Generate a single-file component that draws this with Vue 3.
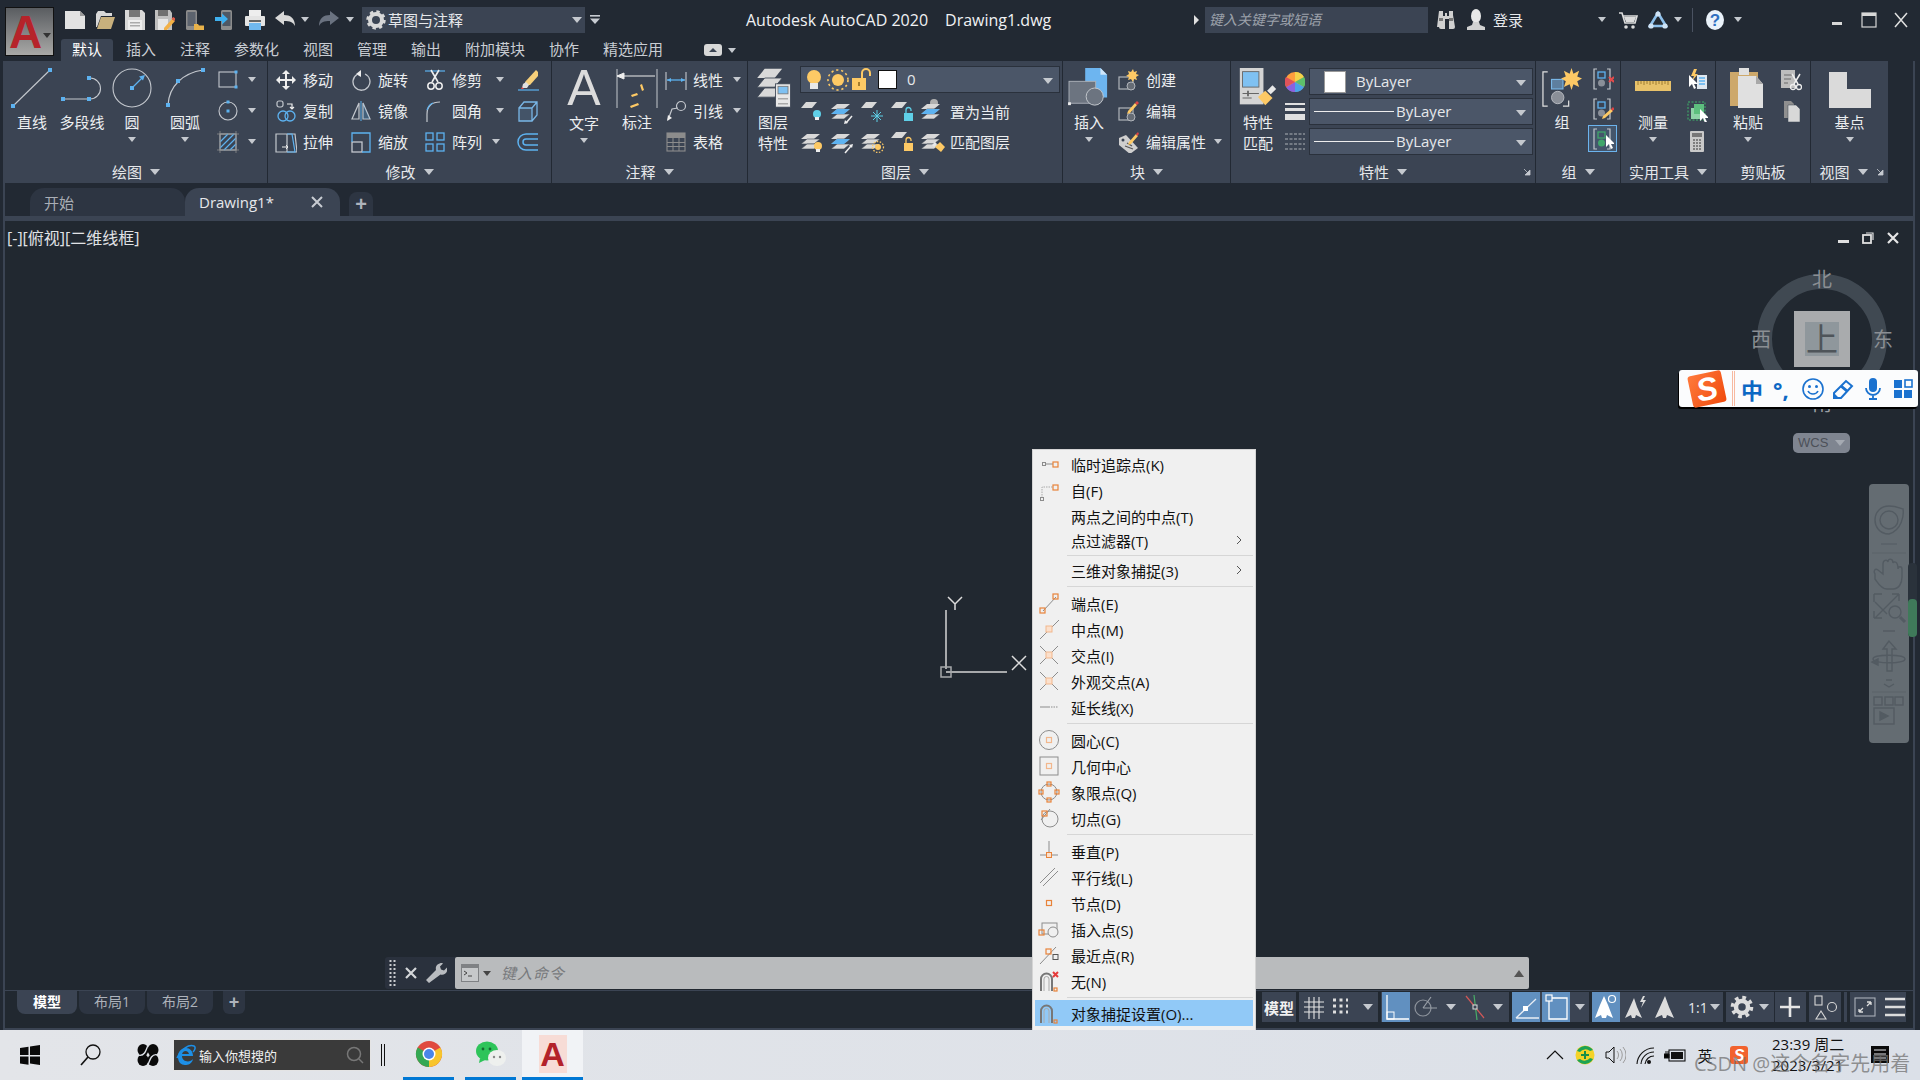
<template>
  <div class="app">
    <!-- application logo sits over title bar and tab row -->
    <div class="logo"><span class="logo-a">A</span><i class="logo-dd"></i></div>

    <header class="titlebar">
      <div class="qat">
        <Ico n="new" :w="20" :h="20" class="q-new" />
        <Ico n="open" :w="20" :h="20" />
        <Ico n="save" :w="20" :h="20" />
        <Ico n="saveas" :w="20" :h="20" />
        <Ico n="cloudopen" :w="20" :h="20" />
        <Ico n="cloudsave" :w="20" :h="20" />
        <Ico n="print" :w="20" :h="20" />
        <Ico n="undo" :w="20" :h="20" />
        <i class="dd dd-undo"></i>
        <Ico n="redo" :w="20" :h="20" class="q-redo" />
        <i class="dd dd-redo"></i>
      </div>
      <div class="workspace">
        <Ico n="gear" :w="20" :h="20" />
        <span>草图与注释</span>
        <i class="dd dd-big"></i>
      </div>
      <Ico n="qatmenu" :w="10" :h="10" class="qatmenu" />
      <div class="app-title">Autodesk AutoCAD 2020<span class="doc-name">Drawing1.dwg</span></div>
      <i class="search-tri"></i>
      <div class="searchbox">键入关键字或短语</div>
      <Ico n="binoc" :w="20" :h="20" class="t-binoc" />
      <Ico n="user" :w="20" :h="22" class="t-user" />
      <span class="login">登录</span>
      <i class="dd dd-login"></i>
      <Ico n="cart" :w="20" :h="20" class="t-cart" />
      <Ico n="a360" :w="20" :h="20" class="t-a360" />
      <i class="dd dd-a360"></i>
      <b class="t-sep"></b>
      <Ico n="help" :w="20" :h="22" class="t-help" />
      <i class="dd dd-help"></i>
      <div class="winbtns">
        <Ico n="wmin" :w="14" :h="18" />
        <Ico n="wmax" :w="16" :h="18" />
        <Ico n="wclose" :w="16" :h="18" />
      </div>
    </header>

    <nav class="tabrow">
      <span v-for="(t, i) in ribbonTabs" :key="t" class="rtab" :class="{ on: i === 0 }">{{ t }}</span>
      <Ico n="panelbtn" :w="18" :h="12" class="rtab-btn" />
      <i class="dd dd-tab"></i>
    </nav>

    <div class="main">
      <section class="ribbon">
        <!-- 绘图 -->
        <div class="panel p-draw">
          <div class="body">
            <div class="big w54"><Ico n="line" :w="44" :h="40" /><span>直线</span></div>
            <div class="big w46"><Ico n="pline" :w="44" :h="40" /><span>多段线</span></div>
            <div class="big w54"><Ico n="circle" :w="44" :h="40" /><span>圆</span><i class="dd"></i></div>
            <div class="big w52"><Ico n="arc" :w="44" :h="40" /><span>圆弧</span><i class="dd"></i></div>
            <div class="col draw-col">
              <div class="sm"><Ico n="rect" /><i class="dd"></i></div>
              <div class="sm"><Ico n="ell" /><i class="dd"></i></div>
              <div class="sm"><Ico n="hatch" /><i class="dd"></i></div>
            </div>
          </div>
          <div class="ptitle">绘图<i class="dd dd-t"></i></div>
        </div>
        <!-- 修改 -->
        <div class="panel p-modify">
          <div class="body">
            <div class="mod-grid">
              <div class="sm"><Ico n="move" /><span>移动</span></div>
              <div class="sm"><Ico n="rotate" /><span>旋转</span></div>
              <div class="sm"><Ico n="trim" /><span>修剪</span><i class="dd"></i></div>
              <Ico n="erase" />
              <div class="sm"><Ico n="copy" /><span>复制</span></div>
              <div class="sm"><Ico n="mirror" /><span>镜像</span></div>
              <div class="sm"><Ico n="fillet" /><span>圆角</span><i class="dd"></i></div>
              <Ico n="box3d" />
              <div class="sm"><Ico n="stretch" /><span>拉伸</span></div>
              <div class="sm"><Ico n="scale" /><span>缩放</span></div>
              <div class="sm"><Ico n="array" /><span>阵列</span><i class="dd dd-arr"></i></div>
              <Ico n="offset" />
            </div>
          </div>
          <div class="ptitle">修改<i class="dd dd-t"></i></div>
        </div>
        <!-- 注释 -->
        <div class="panel p-annot">
          <div class="body">
            <div class="big w64"><span class="big-a">A</span><span>文字</span><i class="dd"></i></div>
            <div class="big w42"><Ico n="dim" :w="42" :h="40" /><span>标注</span></div>
            <div class="col annot-col">
              <div class="sm"><Ico n="linear" /><span>线性</span><i class="dd"></i></div>
              <div class="sm"><Ico n="leader" /><span>引线</span><i class="dd"></i></div>
              <div class="sm"><Ico n="table" /><span>表格</span></div>
            </div>
          </div>
          <div class="ptitle">注释<i class="dd dd-t"></i></div>
        </div>
        <!-- 图层 -->
        <div class="panel p-layer">
          <div class="body">
            <div class="big w50 two"><Ico n="layers" :w="42" :h="48" /><span>图层</span><span>特性</span></div>
            <div class="layer-col">
              <div class="combo layer-combo">
                <Ico n="bulb" :w="20" :h="24" />
                <Ico n="sun" :w="22" :h="24" />
                <Ico n="lock" :w="20" :h="24" />
                <b class="swatch"></b>
                <span>0</span>
                <i class="dd dd-big"></i>
              </div>
              <div class="layer-row">
                <Ico n="l1" :w="26" :h="26" /><Ico n="l2" :w="26" :h="26" /><Ico n="l3" :w="26" :h="26" /><Ico n="l4" :w="26" :h="26" /><Ico n="l5" :w="26" :h="26" /><span>置为当前</span>
              </div>
              <div class="layer-row">
                <Ico n="l6" :w="26" :h="26" /><Ico n="l7" :w="26" :h="26" /><Ico n="l8" :w="26" :h="26" /><Ico n="l9" :w="26" :h="26" /><Ico n="l10" :w="26" :h="26" /><span>匹配图层</span>
              </div>
            </div>
          </div>
          <div class="ptitle">图层<i class="dd dd-t"></i></div>
        </div>
        <!-- 块 -->
        <div class="panel p-block">
          <div class="body">
            <div class="big w52"><Ico n="insert" :w="44" :h="42" /><span>插入</span><i class="dd"></i></div>
            <div class="col block-col">
              <div class="sm"><Ico n="bcreate" /><span>创建</span></div>
              <div class="sm"><Ico n="bedit" /><span>编辑</span></div>
              <div class="sm"><Ico n="battr" /><span>编辑属性</span><i class="dd"></i></div>
            </div>
          </div>
          <div class="ptitle">块<i class="dd dd-t"></i></div>
        </div>
        <!-- 特性 -->
        <div class="panel p-prop">
          <div class="body">
            <div class="big w54 two"><Ico n="match" :w="40" :h="44" /><span>特性</span><span>匹配</span></div>
            <div class="prop-col">
              <div class="prop-row">
                <Ico n="wheel" :w="20" :h="24" />
                <div class="combo"><b class="swatch swatch-b"></b><span class="by1">ByLayer</span><i class="dd dd-big"></i></div>
              </div>
              <div class="prop-row">
                <Ico n="lweight" :w="20" :h="24" />
                <div class="combo"><b class="ln"></b><span>ByLayer</span><i class="dd dd-big"></i></div>
              </div>
              <div class="prop-row">
                <Ico n="ltype" :w="20" :h="24" />
                <div class="combo"><b class="ln"></b><span>ByLayer</span><i class="dd dd-big"></i></div>
              </div>
            </div>
          </div>
          <div class="ptitle">特性<i class="dd dd-t"></i><Ico n="expand" :w="8" :h="8" class="expand" /></div>
        </div>
        <!-- 组 -->
        <div class="panel p-group">
          <div class="body">
            <div class="big w52"><Ico n="group" :w="42" :h="42" /><span>组</span></div>
            <div class="col group-col">
              <div class="gb"><Ico n="gdel" /></div>
              <div class="gb"><Ico n="gedit" /></div>
              <div class="gb gb-on"><Ico n="gsel" /></div>
            </div>
          </div>
          <div class="ptitle">组<i class="dd dd-t"></i></div>
        </div>
        <!-- 实用工具 -->
        <div class="panel p-util">
          <div class="body">
            <div class="big w64"><Ico n="ruler" :w="40" :h="40" /><span>测量</span><i class="dd"></i></div>
            <div class="col util-col">
              <div class="sm"><Ico n="qsel" /></div>
              <div class="sm"><Ico n="selall" /></div>
              <div class="sm"><Ico n="calc" /></div>
            </div>
          </div>
          <div class="ptitle">实用工具<i class="dd dd-t"></i></div>
        </div>
        <!-- 剪贴板 -->
        <div class="panel p-clip">
          <div class="body">
            <div class="big w64"><Ico n="paste" :w="36" :h="40" /><span>粘贴</span><i class="dd"></i></div>
            <div class="col">
              <div class="sm"><Ico n="cut" /></div>
              <div class="sm"><Ico n="copyclip" /></div>
            </div>
          </div>
          <div class="ptitle">剪贴板</div>
        </div>
        <!-- 视图 -->
        <div class="panel p-view">
          <div class="body">
            <div class="big w77"><Ico n="base" :w="42" :h="40" /><span>基点</span><i class="dd"></i></div>
          </div>
          <div class="ptitle view-t">视图<i class="dd dd-t"></i><Ico n="expand" :w="8" :h="8" class="expand" /></div>
        </div>
      </section>

      <div class="doctabs">
        <div class="dtab">开始</div>
        <div class="dtab on"><span>Drawing1*</span><Ico n="x" :w="12" :h="12" /></div>
        <div class="dtab-add">+</div>
      </div>
      <div class="docbar"></div>

      <section class="viewport">
        <div class="vp-label">[-][俯视][二维线框]</div>
        <div class="vp-btns">
          <Ico n="vmin" :w="14" :h="14" /><Ico n="vrest" :w="14" :h="14" /><Ico n="vclose" :w="14" :h="14" />
        </div>

        <div class="viewcube">
          <div class="ring"></div>
          <div class="cube"><div class="cube-in">上</div></div>
          <span class="dir d-n">北</span>
          <span class="dir d-w">西</span>
          <span class="dir d-e">东</span>
          <span class="dir d-s">南</span>
          <div class="wcs">WCS<i class="wcs-tri"></i></div>
        </div>

        <div class="sogou">
          <div class="sg-logo"><span>S</span></div>
          <b class="sg-sep"></b>
          <span class="sg-zh">中</span>
          <span class="sg-pu">°,</span>
          <Ico n="smile" :w="24" :h="24" />
          <Ico n="pen" :w="24" :h="24" />
          <Ico n="mic" :w="24" :h="24" />
          <Ico n="grid4" :w="24" :h="24" />
        </div>

        <div class="navbar"><Ico n="nav" :w="40" :h="259" /></div>
        <div class="nav-scroll"><b></b></div>

        <Ico n="ucs" :w="110" :h="90" class="ucs" />

        <div class="cmd">
          <div class="cmd-grip">
            <Ico n="grip" :w="8" :h="28" />
            <Ico n="cx" :w="14" :h="14" />
            <Ico n="wrench" :w="22" :h="22" />
          </div>
          <div class="cmd-input">
            <Ico n="term" :w="20" :h="20" />
            <i class="dd dd-cmd"></i>
            <span>键入命令</span>
            <i class="dd-up"></i>
          </div>
        </div>
      </section>

      <footer class="statusrow">
        <div class="ltabs">
          <span class="ltab on">模型</span>
          <span class="ltab l1">布局1</span>
          <span class="ltab l2">布局2</span>
          <span class="ltab-add">+</span>
        </div>
        <div class="status">
          <div class="g g1">模型</div>
          <div class="g g2"><Ico n="sgrid" :w="24" :h="26" class="s1" /><Ico n="sdots" :w="24" :h="26" class="s2" /><i class="dd dd-s dd-g2"></i></div>
          <div class="g g3">
            <div class="sb on"><Ico n="sortho" :w="26" :h="28" /></div>
            <Ico n="spolar" :w="28" :h="26" /><i class="dd dd-s dd-g3"></i>
            <Ico n="siso" :w="26" :h="26" class="s3" /><i class="dd dd-s"></i>
          </div>
          <div class="g g4">
            <div class="sb on"><Ico n="sosnap" :w="26" :h="28" /></div>
            <div class="sb on"><Ico n="sotrack" :w="26" :h="28" /></div>
            <i class="dd dd-s"></i>
          </div>
          <div class="g g5">
            <div class="sb on"><Ico n="sann" :w="26" :h="28" /></div>
            <Ico n="sann2" :w="26" :h="28" class="s4" />
            <Ico n="sann3" :w="26" :h="28" class="s4" />
            <span class="scale">1:1</span><i class="dd dd-s dd-sc"></i>
          </div>
          <div class="g g6"><Ico n="sgear" :w="24" :h="24" /><i class="dd dd-s"></i><b class="g6-sep"></b><Ico n="splus" :w="24" :h="24" /></div>
          <div class="g g7"><Ico n="sshape" :w="26" :h="26" /></div>
          <div class="g g8s"></div>
          <div class="g g8"><Ico n="sfull" :w="24" :h="24" /><Ico n="smenu" :w="24" :h="24" class="s5" /></div>
        </div>
      </footer>
    </div>

    <footer class="taskbar">
      <div class="tb-slot tb-win"><Ico n="win" :w="22" :h="22" /></div>
      <div class="tb-slot tb-find"><Ico n="find" :w="24" :h="24" /></div>
      <div class="tb-slot tb-swirl"><Ico n="swirl" :w="24" :h="24" /></div>
      <div class="tb-search">
        <Ico n="ie" :w="20" :h="22" />
        <span>输入你想搜的</span>
        <Ico n="mag" :w="18" :h="18" class="tb-mag" />
      </div>
      <div class="tb-bars"></div>
      <div class="tb-app chrome"><Ico n="chrome" :w="28" :h="28" /></div>
      <div class="tb-app wechat"><Ico n="wechat" :w="32" :h="28" /></div>
      <div class="tb-app acad"><span class="tb-a">A</span></div>
      <div class="tray">
        <div class="tslot"><Ico n="caret" :w="18" :h="12" /></div>
        <div class="tslot"><Ico n="trayg" :w="20" :h="20" /></div>
        <div class="tslot"><Ico n="speaker" :w="22" :h="20" /></div>
        <div class="tslot"><Ico n="wifi" :w="20" :h="20" /></div>
        <div class="tslot"><Ico n="battery" :w="22" :h="16" /></div>
        <div class="tslot t-ying">英</div>
        <div class="tslot t-sg"><Ico n="traysg" :w="20" :h="20" /></div>
        <div class="clock"><div>23:39 周二</div><div>2023/3/21</div></div>
        <div class="tslot t-note"><Ico n="note" :w="20" :h="20" /></div>
      </div>
      <div class="watermark">CSDN @这个名字先用着</div>
    </footer>

    <!-- object snap context menu -->
    <div class="menu">
      <template v-for="(m, i) in menuItems" :key="i">
        <div v-if="m.sep" class="m-sep" :style="{ height: m.sep + 'px' }"><b></b></div>
        <div v-else class="m-row" :class="{ hot: m.hot }" :style="{ height: (m.h || 26) + 'px' }">
          <div class="m-ic"><Ico v-if="m.ic" :n="m.ic" :w="22" :h="22" /></div>
          <span class="m-t">{{ m.t }}</span>
          <svg v-if="m.sub" class="m-sub" width="6" height="10" viewBox="0 0 6 10"><path d="M1 1l4 4-4 4" fill="none" stroke="#555" stroke-width="1" /></svg>
        </div>
      </template>
    </div>
  </div>
</template>

<script setup>
import { h } from 'vue'

const L = '#c4c8ce'
const B = '#5db2f0'
const P = '#d9d9d9'
const Y = '#fdc965'
const O = '#e8833a'
const F = '#f2b78d'
const G = '#8c8c8c'

// small helpers for repeated bits of icon markup
const dot = (x, y, s = 4, c = B) => `<rect x="${x - s / 2}" y="${y - s / 2}" width="${s}" height="${s}" fill="${c}"/>`
const sq = (x, y, s = 6, c = O) => `<rect x="${x - s / 2 + 0.5}" y="${y - s / 2 + 0.5}" width="${s}" height="${s}" fill="none" stroke="${c}" stroke-width="1.2"/>`
const sheet = (y, c = P) => `<path d="M5 ${y}h11l-5 6H0z" transform="translate(1 0)" fill="${c}"/>`
const stack = `<path d="M7 6h13l-6 5H1z" fill="${P}"/><path d="M7 11h13l-6 5H1z" fill="${P}" stroke="#3b4453" stroke-width=".6"/><path d="M7 16h13l-6 5H1z" fill="${P}" stroke="#3b4453" stroke-width=".6"/>`
const bulbS = (x, y, c) => `<circle cx="${x}" cy="${y}" r="4" fill="${c}"/><rect x="${x - 2}" y="${y + 3}" width="4" height="3" fill="#eee"/>`
const sunS = (x, y) => `<circle cx="${x}" cy="${y}" r="3" fill="${Y}"/><circle cx="${x}" cy="${y}" r="5.5" fill="none" stroke="${Y}" stroke-width="1.3" stroke-dasharray="1.5 1.5"/>`
const lockS = (x, y, c) => `<rect x="${x}" y="${y}" width="9" height="8" fill="${c}"/><path d="M${x + 2} ${y}v-3a2.5 2.5 0 015 0v1" fill="none" stroke="${c}" stroke-width="1.3"/>`
const cursor = (x, y) => `<path d="M${x} ${y}v12l3-3 2 5 2-1-2-4h4z" fill="#fff"/>`
const grpShape = (c) => `<path d="M5 1H2v20h3M15 1h3v20h-3" fill="none" stroke="${L}" stroke-width="1.2"/><rect x="6" y="4" width="7" height="6" fill="none" stroke="${c}" stroke-width="1.3"/><circle cx="9.5" cy="15" r="3.5" fill="${c === B ? '#8a8f98' : '#3fa66b'}"/>`

const ic = {
  new: `<path d="M0 1h15l5 5v13H0z" fill="#e2e2e2"/><path d="M15 1l5 5h-5z" fill="#9a9a9a"/>`,
  open: `<path d="M1 4l2-3h6l2 2h6v3H6l-4 11H1z" fill="#d8d8d8"/><path d="M6 7h14l-4 12H2z" fill="#c8b07d"/>`,
  save: `<path d="M0 0h17l3 3v17H0z" fill="#d8d8d8"/><rect x="4" y="0" width="11" height="7" fill="#777"/><rect x="3" y="10" width="14" height="10" fill="#eee"/><rect x="5" y="12" width="10" height="1.5" fill="#aaa"/><rect x="5" y="15" width="10" height="1.5" fill="#aaa"/>`,
  saveas: `<path d="M0 0h15l2 3v17H0z" fill="#bfbfbf"/><rect x="3" y="0" width="10" height="6" fill="#6f6f6f"/><rect x="3" y="9" width="10" height="11" fill="#e6e6e6"/><path d="M9 18l8-9 3 2-8 9-3 1z" fill="#f2b046"/><path d="M16.5 8.5l1.8-1.5 2.5 2-1.6 2z" fill="#e05c4a"/>`,
  cloudopen: `<rect x="1" y="0" width="11" height="20" rx="1.5" fill="#8c8c8c"/><rect x="2.5" y="2" width="8" height="14" fill="#5c636e"/><path d="M9 14h4l1 1.5h5V20H9z" fill="#e8b24a"/>`,
  cloudsave: `<rect x="6" y="0" width="11" height="20" rx="1.5" fill="#8c8c8c"/><rect x="7.5" y="2" width="8" height="14" fill="#4f5864"/><path d="M0 7h7V3.5l6 5.5-6 5.5V11H0z" fill="#3fb0ef"/>`,
  print: `<rect x="4" y="0" width="12" height="6" fill="#eee"/><rect x="0" y="6" width="20" height="10" rx="1" fill="#e4e4e4"/><rect x="4" y="13" width="12" height="7" fill="#70b8ee"/><rect x="4" y="10" width="12" height="2" fill="#666"/>`,
  undo: `<path d="M0 8l9-7v4c6 0 11 3 11 11-2-4-5-5-11-5v4z" fill="#d8d8d8"/>`,
  redo: `<path d="M20 8l-9-7v4C5 5 0 8 0 16c2-4 5-5 11-5v4z" fill="#6a7280"/>`,
  gear: `<circle cx="10" cy="10" r="6" fill="none" stroke="#d8d8d8" stroke-width="4"/><circle cx="10" cy="10" r="8" fill="none" stroke="#d8d8d8" stroke-width="3.4" stroke-dasharray="3.2 3.1"/>`,
  qatmenu: `<rect y="0" width="10" height="1.6" fill="#c8ccd2"/><path d="M0 3.5h10L5 9z" fill="#c8ccd2"/>`,
  binoc: `<path d="M3 1h4v5h2v-3h2v3h2V1h4v4l2 12a2 2 0 01-2 2h-4V9H9v10H5a2 2 0 01-2-2L1 17z" fill="#d0d0d0"/><rect x="3" y="8" width="4" height="3" fill="#777"/><rect x="13" y="8" width="4" height="3" fill="#777"/>`,
  user: `<ellipse cx="10" cy="7" rx="5" ry="7" fill="#e8e8e8"/><path d="M7 13h6l1 3 5 2v3H1v-3l5-2z" fill="#d2d2d2"/>`,
  cart: `<path d="M1 3h3l3 10h10l2-7H5" fill="none" stroke="#dcdcdc" stroke-width="1.6"/><path d="M6 7h12l-2 5H8z" fill="#dcdcdc"/><circle cx="8" cy="17" r="1.8" fill="#dcdcdc"/><circle cx="15" cy="17" r="1.8" fill="#dcdcdc"/>`,
  a360: `<path d="M10 3L2 16h16z" fill="none" stroke="#8ec1ec" stroke-width="2.6"/><circle cx="10" cy="4" r="2.6" fill="#cfe3f5"/><circle cx="3" cy="16" r="2.6" fill="#cfe3f5"/><circle cx="17" cy="16" r="2.6" fill="#cfe3f5"/>`,
  help: `<ellipse cx="10" cy="11" rx="9" ry="10" fill="#eaf2fa"/><text x="10" y="17" font-size="17" font-weight="700" text-anchor="middle" fill="#2f6fc0" font-family="Liberation Sans">?</text>`,
  wmin: `<rect x="1" y="11" width="10" height="3" fill="#d8d8d8"/>`,
  wmax: `<rect x="1" y="2" width="14" height="14" fill="none" stroke="#d8d8d8" stroke-width="1.2"/><rect x="1" y="2" width="14" height="3" fill="#d8d8d8"/>`,
  wclose: `<path d="M2 2l12 14M14 2L2 16" stroke="#e0e0e0" stroke-width="1.5"/>`,
  panelbtn: `<rect x="0" y="0" width="18" height="12" rx="3" fill="#d8d8d8"/><path d="M5 8l4-4 4 4z" fill="#3b4453"/>`,

  line: `<path d="M3 38L40 2" stroke="${L}" stroke-width="1.1"/>${dot(3, 38)}${dot(40, 2)}`,
  pline: `<path d="M3 31h27M30 31a10.5 10.5 0 000-21" fill="none" stroke="${L}" stroke-width="1.1"/>${dot(3, 31)}${dot(29, 31)}${dot(29, 10)}`,
  circle: `<circle cx="22" cy="20" r="19" fill="none" stroke="${L}" stroke-width="1.1"/><path d="M22 20L33 9" stroke="${B}" stroke-width="1.2"/><path d="M35 7l-6 1.5 4 4z" fill="${B}"/>${dot(22, 20)}`,
  arc: `<path d="M5 37C6 18 20 5 40 2" fill="none" stroke="${L}" stroke-width="1.1"/>${dot(5, 37)}${dot(15, 13)}${dot(40, 2)}`,
  rect: `<rect x="2" y="3" width="17" height="15" fill="none" stroke="${L}" stroke-width="1.1"/>${dot(19, 3, 3)}${dot(19, 18, 3)}`,
  ell: `<circle cx="11" cy="11" r="9" fill="none" stroke="${L}" stroke-width="1.1"/>${dot(11, 11, 3)}${dot(11, 2, 3)}`,
  hatch: `<rect x="3" y="3" width="16" height="16" fill="none" stroke="${L}" stroke-width="1"/><path d="M3 11l8-8M3 17L17 3M7 19L19 7M13 19l6-6" stroke="${B}" stroke-width="1.2"/><path d="M3 0v22M19 0v22M0 3h22M0 19h22" stroke="${G}" stroke-width=".8"/>`,
  move: `<path d="M11 1l4 4h-3v5h5V7l4 4-4 4v-3h-5v5h3l-4 4-4-4h3v-5H5v3l-4-4 4-4v3h5V5H7z" fill="#eee"/>`,
  rotate: `<path d="M15 5a8.5 8.5 0 11-8 .5" fill="none" stroke="${L}" stroke-width="1.3"/><path d="M11 1v7l-5-3z" fill="#eee"/>`,
  trim: `<path d="M1 2h20" stroke="${B}" stroke-width="1.2"/><path d="M7 1l7 12M15 1L8 13" stroke="#eee" stroke-width="1.6"/><circle cx="7" cy="17" r="3.2" fill="none" stroke="#eee" stroke-width="1.5"/><circle cx="15" cy="17" r="3.2" fill="none" stroke="#eee" stroke-width="1.5"/>`,
  erase: `<path d="M8 13L19 1l2 2v4l-8 9H9z" fill="#f6cf7a"/><path d="M6 15l3-2 3 3-2 3H5z" fill="#e0e0e0"/><path d="M1 21h21" stroke="${B}" stroke-width="1.2"/><path d="M5 18l2 2H4z" fill="#d44"/>`,
  copy: `<rect x="2" y="1" width="6" height="6" rx="2" fill="none" stroke="${L}" stroke-width="1.2"/><path d="M12 4h5v4M15 7l2 2 2-2" fill="none" stroke="#eee" stroke-width="1.2"/><circle cx="8" cy="16" r="5" fill="none" stroke="${B}" stroke-width="1.3"/><circle cx="15" cy="16" r="5" fill="none" stroke="${B}" stroke-width="1.3"/>`,
  mirror: `<path d="M9 3v16H2zM13 3v16h7z" fill="none" stroke="${L}" stroke-width="1.2"/><path d="M11 1v20" stroke="${B}" stroke-width="1"/><path d="M13 3l7 16h-7z" fill="${B}" opacity=".25"/>`,
  fillet: `<path d="M3 22V14C3 6 8 2 16 2" fill="none" stroke="${L}" stroke-width="1.2"/><path d="M9 3c-3 1-5 4-6 7" fill="none" stroke="${B}" stroke-width="1.2"/>`,
  box3d: `<path d="M2 8h13v13H2zM2 8l5-6h13v13l-5 6M15 8l5-6" fill="none" stroke="#79b6e6" stroke-width="1.3"/><rect x="2" y="8" width="13" height="13" fill="#79b6e6" opacity=".15"/>`,
  stretch: `<path d="M1 3h11v18H1zM12 3l8 0 2 18h-10" fill="none" stroke="${L}" stroke-width="1.2"/><path d="M12 3h5l3 18h-8" fill="none" stroke="${B}" stroke-width="1.2"/><path d="M7 16h6M11 14l2 2-2 2" fill="none" stroke="#eee" stroke-width="1"/>`,
  scale: `<rect x="2" y="11" width="10" height="10" fill="none" stroke="${L}" stroke-width="1.3"/><path d="M2 11V2h18v19h-8" fill="none" stroke="${B}" stroke-width="1.3"/>`,
  array: `<g fill="none" stroke="${B}" stroke-width="1.3"><rect x="2" y="2" width="7" height="7"/><rect x="13" y="2" width="7" height="7"/><rect x="2" y="13" width="7" height="7"/><rect x="13" y="13" width="7" height="7"/></g>`,
  offset: `<path d="M21 3H9a7 7 0 000 16h12M21 8H9a2.5 2.5 0 000 6h12" fill="none" stroke="${B}" stroke-width="1.5"/>`,
  dim: `<path d="M1 1v40M41 1v40" stroke="${L}" stroke-width="1"/><path d="M1 8h38M1 8l7-3v6z" stroke="#eee" stroke-width="1" fill="#eee"/><path d="M15 27l6-2 1 2-6 2zM26 16l2 6-2 1-2-6zM14 38l8-3 1 2-8 3z" fill="${Y}"/>`,
  linear: `<path d="M1 3v18M21 3v18" stroke="${L}" stroke-width="1.1"/><path d="M2 11h18" stroke="${B}" stroke-width="1.3"/><path d="M2 11l4-2v4zM20 11l-4-2v4z" fill="${B}"/>`,
  leader: `<path d="M3 20L7 9l6-1" fill="none" stroke="${L}" stroke-width="1.2"/><path d="M2 21l1-6 4 3z" fill="#eee"/><circle cx="16" cy="6" r="4.5" fill="none" stroke="${L}" stroke-width="1.2"/>`,
  table: `<rect x="2" y="2" width="18" height="18" fill="none" stroke="${G}" stroke-width="1.1"/><rect x="2" y="2" width="18" height="5" fill="${G}"/><path d="M2 11.5h18M2 15.5h18M8 7v13M14 7v13" stroke="${G}" stroke-width="1"/>`,
  layers: `<path d="M11 0h21l-9 11H2z" fill="${P}" transform="translate(0 1)"/><path d="M11 0h21l-9 11H2z" fill="${P}" stroke="#3b4453" transform="translate(0 12)"/><path d="M11 0h21l-9 11H2z" fill="${P}" stroke="#3b4453" transform="translate(0 24)"/><rect x="24" y="19" width="18" height="28" fill="#e8e8e8" stroke="#3b4453"/><rect x="27" y="22" width="12" height="9" fill="#7fc1f2" stroke="#777"/><path d="M27 37h12M27 43h12" stroke="#777" stroke-width="1"/>`,
  bulb: `<circle cx="10" cy="9" r="7" fill="${Y}"/><rect x="6" y="15" width="8" height="6" fill="#e8e8e8"/>`,
  sun: `<circle cx="11" cy="12" r="6" fill="${Y}"/><circle cx="11" cy="12" r="10" fill="none" stroke="${Y}" stroke-width="1.6" stroke-dasharray="2.2 2.8"/>`,
  lock: `<rect x="0" y="10" width="14" height="12" fill="${Y}"/><path d="M10 10V5a4 4 0 018 0v3" fill="none" stroke="${Y}" stroke-width="2"/><rect x="6" y="14" width="2" height="4" fill="#a67c2d"/>`,
  l1: `${sheet(4)}${bulbS(17, 16, '#5fd0e8')}`,
  l2: `${stack}<path d="M7 11h13l-6 5H1z" fill="${B}"/><path d="M16 25l6-7" stroke="#eee" stroke-width="1.5"/><path d="M14 26l1-4 3 3z" fill="#eee"/>`,
  l3: `${sheet(4)}<path d="M17 12v12M11 18h12M13 14l8 8M21 14l-8 8" stroke="#5fd0e8" stroke-width="1"/>`,
  l4: `${sheet(4)}${lockS(14, 15, '#5fd0e8')}`,
  l5: `<circle cx="14" cy="5" r="4" fill="#b0b0b0"/>${stack}<path d="M7 11h13l-6 5H1z" fill="${B}"/>`,
  l6: `${stack}${bulbS(18, 18, Y)}`,
  l7: `${stack}<path d="M7 11h13l-6 5H1z" fill="${B}"/><path d="M15 25l6-7" stroke="#eee" stroke-width="1.5"/><path d="M23 16l-1 4-3-3z" fill="#eee"/>`,
  l8: `${stack}${sunS(18, 19)}`,
  l9: `${sheet(4)}${lockS(14, 15, Y)}`,
  l10: `${stack}<path d="M15 19l5-5 5 5-4 5z" fill="${Y}"/><path d="M12 17l3-3 2 2-3 3z" fill="#e8e8e8"/>`,
  insert: `<path d="M18 0h16l7 7v24H18z" fill="#6db5f0"/><path d="M34 0l7 7h-7z" fill="#cfe6fa"/><rect x="1" y="14" width="28" height="23" fill="#6c7480" stroke="#aab0b8"/><circle cx="28" cy="30" r="9" fill="#6c7480" stroke="#c4c8ce"/><rect x="0" y="36" width="3" height="3" fill="#eee"/>`,
  bcreate: `<rect x="2" y="8" width="14" height="12" fill="none" stroke="#b0b4ba" stroke-width="1.2"/><circle cx="14" cy="17" r="4" fill="#666c75" stroke="#b0b4ba"/><path d="M16 0l1 3 3-1-1 3 3 1-3 2 1 3-3-1-1 3-2-3-3 1 1-3-3-1 3-2-1-3 3 1z" fill="${Y}"/>`,
  bedit: `<rect x="2" y="8" width="14" height="12" fill="none" stroke="#b0b4ba" stroke-width="1.2"/><circle cx="14" cy="17" r="4" fill="#666c75" stroke="#b0b4ba"/><path d="M11 11l7-8 2 2-7 8-3 1z" fill="${Y}"/><path d="M18 3l2-2 2 2-2 2z" fill="#d44"/>`,
  battr: `<path d="M2 7l7-3 12 13-8 6L2 14z" fill="#cfcfcf"/><circle cx="6" cy="9" r="1.5" fill="#3b4453"/><path d="M8 15l8 3M10 12l5 3" stroke="#555" stroke-width="1.2"/><path d="M12 11l7-8 2 2-7 8-3 1z" fill="${Y}"/><path d="M19 3l2-2 1 2-2 2z" fill="#d44"/>`,
  match: `<rect x="0" y="0" width="26" height="40" fill="#d4d4d4"/><rect x="3" y="4" width="18" height="17" fill="#7fc1f2" stroke="#666"/><path d="M3 28h18M3 33h10" stroke="#666" stroke-width="1.2"/><path d="M9 25v6" stroke="#666" stroke-width="2"/><path d="M20 32l8-7 8 8-8 8z" fill="${Y}"/><path d="M30 25l6-6 4 4-6 6z" fill="#e8e8e8"/>`,
  wheel: `<circle cx="10" cy="12" r="10" fill="#ff9e3d"/><path d="M10 12L10 2a10 10 0 019 5z" fill="#f4d34a"/><path d="M10 12l9-5a10 10 0 010 10z" fill="#5dbf6a"/><path d="M10 12l9 5a10 10 0 01-9 5z" fill="#4aa3e8"/><path d="M10 12v10a10 10 0 01-9-5z" fill="#8a62e0"/><path d="M10 12l-9 5a10 10 0 010-10z" fill="#e0535a"/>`,
  lweight: `<rect y="3" width="20" height="2" fill="#e0e0e0"/><rect y="8" width="20" height="3" fill="#e0e0e0"/><rect y="14" width="20" height="6" fill="#e0e0e0"/>`,
  ltype: `<path d="M0 4h20M0 9h20M0 14h20M0 19h20" stroke="#aeb2b8" stroke-width="1.2" stroke-dasharray="3 1.5"/>`,
  expand: `<path d="M1 1l5 5M7 2v5H2z" stroke="#c5c9cf" fill="#c5c9cf" stroke-width=".8"/>`,
  group: `<path d="M6 4H1v36h5M28 34v6h-6" fill="none" stroke="#e0e0e0" stroke-width="1.3"/><rect x="10" y="12" width="12" height="10" fill="#5e7f9f" stroke="#79b6e6" stroke-width="1.2"/><circle cx="16.5" cy="31" r="6.5" fill="#8a8f98" stroke="#b8bcc2"/><path d="M31 0l2 6 6-3-2 6 5 2-5 3 2 6-6-3-2 6-2-6-6 3 2-6-5-3 5-2-2-6 6 3z" fill="${Y}"/>`,
  gdel: `${grpShape(B)}<path d="M17 9l5 5M22 9l-5 5" stroke="#e34b4b" stroke-width="2"/>`,
  gedit: `${grpShape(B)}<path d="M11 18l8-7 2 2-8 7-3 1z" fill="${Y}"/><path d="M19 11l2-2 1.5 2-2 2z" fill="#d44"/>`,
  gsel: `${grpShape('#3fa66b')}${cursor(14, 7)}`,
  ruler: `<rect x="2" y="13" width="36" height="10" fill="#e8c26a"/><path d="M5 13v4M8 13v3M11 13v4M14 13v3M17 13v4M20 13v3M23 13v4M26 13v3M29 13v4M32 13v3M35 13v4" stroke="#8a6a22" stroke-width=".8"/>`,
  qsel: `<path d="M8 0l-3 7h3l-2 5 6-7H9l2-5z" fill="${Y}"/><rect x="11" y="6" width="10" height="14" fill="#dfe8f0"/><path d="M13 9h6M13 12h6M13 15h6" stroke="${B}" stroke-width="1.3"/>${cursor(3, 6)}`,
  selall: `<rect x="2" y="2" width="17" height="18" fill="none" stroke="#3fb56b" stroke-dasharray="2 1.5"/><rect x="5" y="8" width="11" height="11" fill="#8fd3a8"/><rect x="8" y="4" width="10" height="10" fill="#5dbf7e"/>${cursor(14, 9)}`,
  calc: `<rect x="4" y="0" width="14" height="21" rx="1" fill="#c9c9c9"/><rect x="6" y="2" width="10" height="4" fill="#777"/><path d="M7 9h2M10 9h2M13 9h2M7 12h2M10 12h2M13 12h2M7 15h2M10 15h2M13 15h2M7 18h2M10 18h2M13 18h2" stroke="#666" stroke-width="1.5"/>`,
  paste: `<rect x="0" y="4" width="28" height="34" fill="#cda86b"/><rect x="9" y="0" width="10" height="7" fill="#e0e0e0"/><path d="M8 8h18l7 8v24H8z" fill="#e0e0e0"/><path d="M26 8l7 8h-7z" fill="#a8a8a8"/>`,
  cut: `<rect x="1" y="1" width="14" height="18" fill="#bdbdbd"/><path d="M4 6h8M4 10h7M4 14h4" stroke="#6b6b6b" stroke-width="1.2"/><path d="M12 5l6 10M20 5l-6 10" stroke="#eee" stroke-width="1.5"/><circle cx="13" cy="18" r="2.5" fill="none" stroke="#eee" stroke-width="1.3"/><circle cx="19" cy="18" r="2.5" fill="none" stroke="#eee" stroke-width="1.3"/>`,
  copyclip: `<path d="M4 1h7l3 3v14H4z" fill="#8f8f8f"/><path d="M8 5h8l4 4v13H8z" fill="#d8d8d8" stroke="#3b4453" stroke-width=".5"/>`,
  base: `<path d="M0 0h18v17h24v19H0z" fill="#dadada" transform="translate(0 4)"/>`,
  x: `<path d="M1 1l10 10M11 1L1 11" stroke="#c8ccd2" stroke-width="2"/>`,
  vmin: `<rect x="2" y="9" width="11" height="3" fill="#e0e0e0"/>`,
  vrest: `<rect x="2" y="4" width="8" height="8" fill="none" stroke="#e0e0e0" stroke-width="1.8"/><path d="M5 2h7v7" fill="none" stroke="#e0e0e0" stroke-width="1.2"/>`,
  vclose: `<path d="M2 2l10 10M12 2L2 12" stroke="#e6e6e6" stroke-width="2.2"/>`,
  smile: `<circle cx="12" cy="12" r="10" fill="none" stroke="#1b72cf" stroke-width="1.6"/><circle cx="8.5" cy="9.5" r="1.5" fill="#1b72cf"/><circle cx="15.5" cy="9.5" r="1.5" fill="#1b72cf"/><path d="M7 14c2 4 8 4 10 0" fill="none" stroke="#1b72cf" stroke-width="1.6"/>`,
  pen: `<path d="M3 16L15 4l6 5-11 12H3z" fill="none" stroke="#1b72cf" stroke-width="2"/><path d="M3 16l5 5H3zM11 8l6 5-2 2-6-5z" fill="#1b72cf"/>`,
  mic: `<rect x="8" y="1" width="8" height="14" rx="4" fill="#1b72cf"/><path d="M5 11a7 7 0 0014 0M12 18v4M8 22h8" fill="none" stroke="#1b72cf" stroke-width="1.8"/>`,
  grid4: `<rect x="3" y="3" width="8" height="8" fill="#1b72cf"/><rect x="14" y="3" width="7" height="7" fill="none" stroke="#1b72cf" stroke-width="1.6"/><rect x="3" y="13" width="8" height="8" fill="#1b72cf"/><rect x="13" y="13" width="8" height="8" fill="#1b72cf"/>`,
  nav: `<g fill="none" stroke="#535b62" stroke-width="1.4"><path d="M20 22c7 0 13 3 14 3 1 6-1 21-14 25C10 50 6 42 6 36 6 28 12 22 20 22z"/><circle cx="20" cy="36" r="9"/><path d="M12 60h16" stroke-width="1"/><path d="M3 69h34" stroke-width=".5"/><path d="M6 95c3 4 6 10 12 10h6c6 0 9-6 9-12V85c0-3-4-3-4 0 0-8-4-8-5-6 0-5-5-5-5-1-1-3-5-2-5 2v10l-5-4c-3-2-5 1-3 4z"/><path d="M6 118l12 12M30 110l-24 24M5 110v8M5 110h8M30 110h-7M30 110v7M5 134h8M5 134v-7"/><circle cx="26" cy="128" r="6"/><path d="M31 133l5 5" stroke-width="3"/><path d="M14 147h12"/><path d="M20 157l-6 8h4v22h5v-22h4z"/><path d="M4 175c0-5 32-5 32 0s-32 5-32 0z"/><path d="M3 178l6 3v-6z" fill="#535b62"/><path d="M17 196h6M15 200l5 3 5-3"/><path d="M3 208h34" stroke-width=".5"/><rect x="5" y="213" width="8" height="8"/><rect x="16" y="213" width="8" height="8"/><rect x="26" y="213" width="8" height="8"/><rect x="5" y="224" width="20" height="16"/><path d="M11 228l8 4-8 4z" fill="#535b62"/></g>`,
  ucs: `<path d="M9 14v59" stroke="#a7a9ab" stroke-width="2"/><path d="M9 76h61" stroke="#a7a9ab" stroke-width="2"/><rect x="4" y="71" width="10" height="10" fill="none" stroke="#a7a9ab" stroke-width="1.5"/><path d="M75 60l14 14M89 60L75 74" stroke="#dcdcdc" stroke-width="1.5"/><path d="M11 1l7 7 7-7M18 8v6" fill="none" stroke="#dcdcdc" stroke-width="1.5"/>`,
  grip: `<path d="M1.5 1v26M5.5 1v26" stroke="#c9ccd0" stroke-width="2" stroke-dasharray="2 2"/>`,
  cx: `<path d="M2 2l10 10M12 2L2 12" stroke="#d4d6d9" stroke-width="2.2"/>`,
  wrench: `<path d="M4 21l-3-3 10-10c-1-4 2-7 6-7l1 .5-3 3 1 3 3 1 3-3 .5 1c0 4-3 7-7 6z" fill="#b9bcc0"/>`,
  term: `<rect x="1" y="1" width="18" height="18" fill="#7f8184"/><rect x="2" y="5" width="16" height="13" fill="#c6c8ca"/><path d="M4 8l3 2-3 2M8 13h4" fill="none" stroke="#444" stroke-width="1"/>`,
  sgrid: `<path d="M1 8h20M1 13h20M1 18h20M6 3v22M11 3v22M16 3v22" stroke="#e6e6e6" stroke-width="1.1"/>`,
  sdots: `<path d="M3 6h15M3 12h15M3 18h15" stroke="#dedede" stroke-width="3" stroke-dasharray="3 3.5"/>`,
  sortho: `<path d="M4 2v24h22" fill="none" stroke="#fff" stroke-width="1.3"/><rect x="4" y="19" width="7" height="7" fill="none" stroke="#fff" stroke-width="1"/>`,
  spolar: `<circle cx="13" cy="14" r="8" fill="none" stroke="#8d939c" stroke-width="1.2"/><path d="M13 14L21 3M13 14h14" stroke="#9aa0a8" stroke-width="1.2"/>`,
  siso: `<path d="M4 2l18 22" stroke="#d15858" stroke-width="1.2"/><path d="M12 1l3 25" stroke="#49ad68" stroke-width="1.2"/><rect x="11" y="11" width="4" height="4" fill="#3b4453" stroke="#ddd"/>`,
  sosnap: `<path d="M3 25L23 6M3 25h23" fill="none" stroke="#e8edf4" stroke-width="1.3"/><rect x="10" y="13" width="5" height="5" fill="#fff"/>`,
  sotrack: `<rect x="3" y="2" width="6" height="6" fill="none" stroke="#fff" stroke-width="1.2"/><path d="M9 5h15v21H6V8" fill="none" stroke="#fff" stroke-width="1.3"/>`,
  sann: `<path d="M11 3l4 9 5 13-6-3-1 3h-4l-1-3-6 3 5-13z" fill="#fff"/><circle cx="19" cy="6" r="3.5" fill="none" stroke="#fff" stroke-width="1.2"/>`,
  sann2: `<path d="M11 5l3 9 5 11-6-3-1 3h-3l-1-3-6 3 5-11z" fill="#dcdcdc"/><path d="M20 3l-3 6h3l-2 6 5-8h-3l2-4z" fill="#dcdcdc"/>`,
  sann3: `<path d="M13 3l4 11 5 11-7-3-1 3h-3l-1-3-7 3 5-11z" fill="#dcdcdc"/>`,
  sgear: `<circle cx="12" cy="12" r="6" fill="none" stroke="#dcdcdc" stroke-width="4.5"/><circle cx="12" cy="12" r="9.5" fill="none" stroke="#dcdcdc" stroke-width="3.6" stroke-dasharray="3.7 3.76"/>`,
  splus: `<path d="M12 2v20M2 12h20" stroke="#e6e6e6" stroke-width="2.6"/>`,
  sshape: `<rect x="3" y="2" width="7" height="9" fill="none" stroke="#d6d6d6" stroke-width="1.1"/><circle cx="20" cy="13" r="4.5" fill="none" stroke="#d6d6d6" stroke-width="1.1"/><path d="M9 17l5 8H4z" fill="none" stroke="#d6d6d6" stroke-width="1.1"/>`,
  sfull: `<rect x="2" y="3" width="20" height="18" fill="none" stroke="#aab0b8" stroke-width="1.1"/><path d="M14 11l4-4M18 7h-4M18 7v3M6 17l4-4M6 17h4M6 17v-3" fill="none" stroke="#dcdcdc" stroke-width="1.3"/>`,
  smenu: `<path d="M2 4h20M2 12h20M2 20h20" stroke="#dcdcdc" stroke-width="2.6"/>`,
  win: `<path d="M1 4l8.5-1.2V11H1zM11 2.500L21 1v10H11zM1 12.500h8.500v8.200L1 19.500zM11 12.500h10V21l-10-1.400z" fill="#0a0a0a"/>`,
  find: `<circle cx="14" cy="9" r="7" fill="none" stroke="#111" stroke-width="1.3"/><path d="M9 14l-7 8" stroke="#111" stroke-width="1.6"/>`,
  swirl: `<g fill="#0a0a0a"><ellipse cx="7" cy="7" rx="5.5" ry="6"/><ellipse cx="17" cy="7" rx="5.5" ry="6"/><ellipse cx="7" cy="17" rx="5.5" ry="6"/><ellipse cx="17" cy="17" rx="5.5" ry="6"/></g><path d="M2 12C8 14 10 8 12 2M22 12C16 10 14 16 12 22" fill="none" stroke="#dfe3ea" stroke-width="1.3"/>`,
  ie: `<path d="M2 13c0-6 4-9 8-9s7 3 7 8H6c0 6 8 7 11 3-1 5-5 6-8 6-4 0-7-3-7-8zM6 10h7c-1-4-6-4-7 0z" fill="#1d8fe6"/><path d="M1 14C5 5 13 0 18 2c2 1 1 4-1 6" fill="none" stroke="#1d8fe6" stroke-width="1.5"/>`,
  mag: `<circle cx="8" cy="8" r="6.5" fill="none" stroke="#777" stroke-width="1.5"/><path d="M13 13l4 4" stroke="#777" stroke-width="1.5"/>`,
  chrome: `<circle cx="14" cy="14" r="13" fill="#e04a3f"/><path d="M14 14L25.3 7.5A13 13 0 0114 27z" fill="#f7c52d"/><path d="M14 14v13A13 13 0 012.7 7.5z" fill="#34a853"/><circle cx="14" cy="14" r="6.5" fill="#fff"/><circle cx="14" cy="14" r="5" fill="#4a86e8"/>`,
  wechat: `<ellipse cx="12" cy="11" rx="11" ry="9.5" fill="#2ec45a"/><path d="M5 18l-1 5 6-3z" fill="#2ec45a"/><circle cx="8" cy="9" r="1.4" fill="#146b31"/><circle cx="15" cy="9" r="1.4" fill="#146b31"/><ellipse cx="22" cy="18" rx="9" ry="8" fill="#eef0ee"/><circle cx="19" cy="17" r="1.2" fill="#888"/><circle cx="25" cy="17" r="1.2" fill="#888"/>`,
  caret: `<path d="M1 10l8-8 8 8" fill="none" stroke="#111" stroke-width="1.2"/>`,
  trayg: `<circle cx="10" cy="10" r="9.5" fill="#f5d327"/><path d="M2 6a9.5 9.5 0 0116-1l-3 1a7 7 0 00-10 1zM18 14a9.5 9.5 0 01-16 1l3-1a7 7 0 0010-1z" fill="#1da355"/><path d="M10 6v8M6 10h8" stroke="#1a8f48" stroke-width="2"/>`,
  speaker: `<path d="M2 7h3l5-5v16l-5-5H2z" fill="none" stroke="#111" stroke-width="1"/><path d="M13 6a6 6 0 010 8M16 4a9 9 0 010 12M19 2a12 12 0 010 16" fill="none" stroke="#9c9c9c" stroke-width="1"/>`,
  wifi: `<path d="M2 19A17 17 0 0119 3M6 19A13 13 0 0119 7M10 19a9 9 0 019-8" fill="none" stroke="#111" stroke-width="1.1"/><circle cx="14" cy="17" r="2" fill="#111"/>`,
  battery: `<rect x="5" y="3" width="16" height="11" fill="none" stroke="#111" stroke-width="1.1"/><rect x="7" y="5" width="12" height="7" fill="#111"/><path d="M0 7h5v4H0zM2 4v3M4 4v3" stroke="#111" stroke-width="1"/>`,
  traysg: `<rect x="1" y="1" width="18" height="18" rx="3" fill="#f2622e"/><text x="10" y="16" font-size="16" font-weight="700" font-style="italic" text-anchor="middle" fill="#fff" font-family="Liberation Sans">S</text>`,
  note: `<rect x="1" y="1" width="18" height="17" fill="#0a0a0a"/><path d="M4 5h12M4 9h12M4 13h12" stroke="#e4e6ea" stroke-width="1"/>`,

  mTrack: `<rect x="4.5" y="9.5" width="3" height="3" fill="none" stroke="${G}"/><path d="M8 11h7" stroke="${G}"/>${sq(17, 11, 5)}`,
  mFrom: `<path d="M4 18V7h11" fill="none" stroke="#aaa" stroke-dasharray="1.5 1"/><rect x="2.5" y="17.5" width="3" height="3" fill="none" stroke="${G}"/>${sq(17, 7, 5)}`,
  mEnd: `<path d="M5 19L18 5" stroke="${G}"/>${sq(4, 18, 5)}${sq(17, 4, 5)}`,
  mMid: `<path d="M2 21L21 2" stroke="${G}"/><rect x="8" y="8" width="6" height="6" fill="#fbe0cc" stroke="${F}"/>`,
  mInt: `<path d="M2 2l18 18M20 2L2 20" stroke="${G}"/><rect x="8" y="8" width="6" height="6" fill="#fbe0cc" stroke="${F}"/>`,
  mExt: `<path d="M2 11h10" stroke="${G}"/><path d="M13 11h7" stroke="${G}" stroke-dasharray="1.5 1"/>`,
  mCen: `<circle cx="11" cy="11" r="9.5" fill="none" stroke="${G}"/>${sq(10.5, 10.5, 5, F)}`,
  mGeo: `<rect x="2" y="2" width="18" height="18" fill="none" stroke="${G}"/>${sq(10.5, 10.5, 5, F)}`,
  mQua: `<circle cx="11" cy="11" r="8" fill="none" stroke="${G}"/>${sq(10.5, 2.5, 4)}${sq(10.5, 18.5, 4)}${sq(2.5, 10.5, 4)}${sq(18.5, 10.5, 4)}`,
  mTan: `<circle cx="12" cy="12" r="8" fill="none" stroke="${G}"/><path d="M3 13L12 2" stroke="${G}"/>${sq(6, 6, 5)}`,
  mPer: `<path d="M11 1v14M2 15h18" stroke="${G}"/><rect x="8.5" y="12.5" width="5" height="5" fill="#fbe0cc" stroke="${O}"/>`,
  mPar: `<path d="M2 17L17 2M5 20L20 5" stroke="${G}"/>`,
  mNod: `${sq(10.5, 10.5, 5)}`,
  mIns: `<rect x="4" y="5" width="15" height="11" fill="none" stroke="${G}"/><circle cx="15" cy="14" r="5" fill="#f0f0f0" stroke="${G}"/>${sq(3, 14, 5)}`,
  mNea: `<path d="M2 20L18 3" stroke="${G}"/>${sq(10, 7, 5)}<rect x="15" y="10.5" width="5" height="5" fill="none" stroke="#555"/>`,
  mNone: `<path d="M3 21V9a5.5 5.5 0 0111 0v12" fill="none" stroke="#777" stroke-width="2"/><path d="M6 21V9a2.5 2.5 0 015 0v12" fill="none" stroke="#aaa"/>${sq(17, 19, 3)}<path d="M15 2l5 5M20 2l-5 5" stroke="#e63a3a" stroke-width="2"/>`,
  mSet: `<path d="M3 21V9a5.5 5.5 0 0111 0v12" fill="none" stroke="#777" stroke-width="2"/><path d="M6 21V9a2.5 2.5 0 015 0v12" fill="none" stroke="#aaa"/>${sq(17, 19, 3)}`,
}

// renders a named icon as inline svg, size in px
const Ico = (props) =>
  h('svg', {
    width: props.w,
    height: props.h,
    viewBox: `0 0 ${props.w} ${props.h}`,
    innerHTML: ic[props.n],
  })
Ico.props = { n: String, w: { type: Number, default: 22 }, h: { type: Number, default: 22 } }

const ribbonTabs = ['默认', '插入', '注释', '参数化', '视图', '管理', '输出', '附加模块', '协作', '精选应用']

const menuItems = [
  { t: '临时追踪点(K)', ic: 'mTrack' },
  { t: '自(F)', ic: 'mFrom', h: 27 },
  { t: '两点之间的中点(T)', h: 24 },
  { t: '点过滤器(T)', h: 24, sub: true },
  { sep: 6 },
  { t: '三维对象捕捉(3)', h: 24, sub: true },
  { sep: 8 },
  { t: '端点(E)', ic: 'mEnd' },
  { t: '中点(M)', ic: 'mMid' },
  { t: '交点(I)', ic: 'mInt' },
  { t: '外观交点(A)', ic: 'mInt' },
  { t: '延长线(X)', ic: 'mExt' },
  { sep: 7 },
  { t: '圆心(C)', ic: 'mCen' },
  { t: '几何中心', ic: 'mGeo' },
  { t: '象限点(Q)', ic: 'mQua' },
  { t: '切点(G)', ic: 'mTan' },
  { sep: 7 },
  { t: '垂直(P)', ic: 'mPer' },
  { t: '平行线(L)', ic: 'mPar' },
  { t: '节点(D)', ic: 'mNod' },
  { t: '插入点(S)', ic: 'mIns' },
  { t: '最近点(R)', ic: 'mNea' },
  { t: '无(N)', ic: 'mNone' },
  { sep: 6 },
  { t: '对象捕捉设置(O)...', ic: 'mSet', hot: true },
]
</script>

<style>
html,
body {
  margin: 0;
  background: #222933;
  overflow: hidden;
}
</style>

<style scoped>
.app {
  position: relative;
  width: 1920px;
  height: 1080px;
  overflow: hidden;
  display: flex;
  flex-direction: column;
  background: #222933;
  color: #e6e8eb;
  font-family: "Open Sans", "Noto Sans CJK SC", sans-serif;
  font-size: 15px;
}
svg {
  display: block;
  flex: none;
}
i {
  display: block;
  flex: none;
}

/* small dropdown triangle */
.dd {
  width: 0;
  height: 0;
  border-left: 4px solid transparent;
  border-right: 4px solid transparent;
  border-top: 5px solid #c5c9cf;
}
.dd-big {
  position: absolute;
  right: 6px;
  top: 11px;
  border-left-width: 5px;
  border-right-width: 5px;
  border-top-width: 6px;
}
.dd-t {
  margin-left: 8px;
  border-left-width: 5px;
  border-right-width: 5px;
  border-top-width: 6px;
}

.logo {
  position: absolute;
  left: 5px;
  top: 7px;
  width: 49px;
  height: 49px;
  background: linear-gradient(#5a5d61, #a8a8a6);
  border: 1px solid #111;
  box-sizing: border-box;
  z-index: 3;
}
.logo-a {
  position: absolute;
  left: 3px;
  top: 1px;
  font: 700 46px/46px "Liberation Sans", sans-serif;
  color: #b6232a;
}
.logo-dd {
  position: absolute;
  right: 2px;
  top: 25px;
  border-left: 4px solid transparent;
  border-right: 4px solid transparent;
  border-top: 5px solid #333;
}

.titlebar {
  height: 39px;
  display: flex;
  align-items: center;
  flex: none;
}
.qat {
  display: flex;
  align-items: center;
  gap: 10px;
  margin-left: 65px;
  width: 297px;
  flex: none;
}
.dd-undo {
  margin-left: -4px;
}
.dd-redo {
  margin-left: -3px;
}
.workspace {
  position: relative;
  width: 223px;
  height: 26px;
  background: #3b4453;
  display: flex;
  align-items: center;
  gap: 2px;
  padding-left: 4px;
  box-sizing: border-box;
  flex: none;
  font-size: 15px;
}
.workspace .dd-big {
  top: 10px;
  right: 3px;
}
.qatmenu {
  margin-left: 5px;
}
.app-title {
  margin-left: 146px;
  width: 448px;
  flex: none;
  font-family: "Open Sans", "Liberation Sans", sans-serif;
  font-size: 16px;
  color: #f0f1f3;
}
.doc-name {
  margin-left: 17px;
}
.search-tri {
  width: 0;
  height: 0;
  border-top: 5px solid transparent;
  border-bottom: 5px solid transparent;
  border-left: 5px solid #e0e0e0;
}
.searchbox {
  margin-left: 6px;
  width: 223px;
  height: 26px;
  background: #3b4453;
  color: #9ba1aa;
  font-style: italic;
  font-size: 14px;
  line-height: 26px;
  padding-left: 4px;
  box-sizing: border-box;
  flex: none;
}
.t-binoc {
  margin-left: 8px;
}
.t-user {
  margin-left: 10px;
}
.login {
  margin-left: 7px;
  width: 109px;
  flex: none;
}
.t-cart {
  margin-left: 4px;
}
.dd-login {
  margin-left: -4px;
  margin-right: 8px;
}
.t-a360 {
  margin-left: 10px;
}
.dd-a360 {
  margin-left: 6px;
}
.t-sep {
  width: 1px;
  height: 24px;
  background: #4a5261;
  margin-left: 10px;
  flex: none;
}
.t-help {
  margin-left: 12px;
}
.dd-help {
  margin-left: 9px;
}
.winbtns {
  margin-left: 89px;
  display: flex;
  align-items: center;
  gap: 16px;
}

.tabrow {
  height: 22px;
  display: flex;
  align-items: center;
  padding-left: 61px;
  flex: none;
}
.rtab {
  height: 22px;
  line-height: 20px;
  padding: 0 11px;
  width: 30px;
  white-space: nowrap;
  margin-right: 2px;
  color: #c9cdd3;
  text-align: center;
  flex: none;
  box-sizing: content-box;
}
.rtab:nth-child(4) {
  width: 45px;
}
.rtab:nth-child(8),
.rtab:nth-child(10) {
  width: 60px;
}
.rtab.on {
  background: #3b4453;
  color: #fff;
  border-radius: 3px 3px 0 0;
}
.rtab-btn {
  margin-left: 28px;
}
.dd-tab {
  margin-left: 6px;
}

.main {
  flex: 1;
  margin-left: 3px;
  margin-right: 5px;
  border-left: 2px solid #3b4453;
  border-right: 2px solid #3b4453;
  border-bottom: 2px solid #3b4453;
  display: flex;
  flex-direction: column;
  min-height: 0;
}

.ribbon {
  height: 122px;
  display: flex;
  flex: none;
}
.panel {
  position: relative;
  height: 122px;
  background: #3b4453;
  border-right: 1px solid #222933;
  box-sizing: border-box;
  display: flex;
  flex-direction: column;
  flex: none;
}
.p-draw { width: 263px; }
.p-modify { width: 284px; }
.p-annot { width: 196px; }
.p-layer { width: 315px; }
.p-block { width: 168px; }
.p-prop { width: 305px; }
.p-group { width: 85px; }
.p-util { width: 95px; }
.p-clip { width: 95px; }
.p-view { width: 77px; border-right: 0; }
.body {
  height: 101px;
  display: flex;
  flex: none;
}
.ptitle {
  height: 20px;
  display: flex;
  align-items: center;
  justify-content: center;
  color: #e6e8eb;
  font-size: 15px;
  line-height: 20px;
}
.view-t {
  padding-right: 12px;
}
.expand {
  position: absolute;
  right: 4px;
  bottom: 7px;
}
.big {
  display: flex;
  flex-direction: column;
  align-items: center;
  padding-top: 7px;
  box-sizing: border-box;
  flex: none;
  white-space: nowrap;
}
.big > svg {
  height: 40px;
}
.big > span {
  line-height: 20px;
  margin-top: 4px;
  color: #eceef0;
}
.big > i {
  margin-top: 5px;
}
.big.two > span + span {
  margin-top: 1px;
}
.w42 { width: 42px; }
.w46 { width: 46px; }
.w50 { width: 50px; }
.w52 { width: 52px; }
.w54 { width: 54px; }
.w64 { width: 64px; }
.w77 { width: 77px; }
.big > .big-a {
  font: 400 50px/40px "Liberation Sans", sans-serif;
  color: #dcdcdc;
  height: 40px;
  margin-top: 0;
  margin-bottom: 1px;
}
.col {
  display: flex;
  flex-direction: column;
  padding-top: 3px;
}
.sm {
  height: 31px;
  display: flex;
  align-items: center;
  white-space: nowrap;
  color: #eceef0;
}
.sm span {
  margin-left: 6px;
}
.draw-col {
  margin-left: 6px;
}
.draw-col .dd {
  margin-left: 9px;
}
.mod-grid {
  display: grid;
  grid-template-columns: 75px 74px 93px 22px;
  grid-auto-rows: 31px;
  align-items: center;
  padding: 3px 0 0 7px;
}
.mod-grid .dd {
  margin-left: 14px;
}
.mod-grid .dd-arr {
  margin-left: 10px;
}
.annot-col {
  margin-left: 7px;
}
.annot-col span {
  margin-left: 6px;
}
.annot-col .dd {
  margin-left: 10px;
}
.layer-col {
  margin-left: 2px;
  padding-top: 5px;
}
.combo {
  position: relative;
  height: 27px;
  background: #4b5668;
  border: 1px solid #2a313c;
  box-sizing: border-box;
  display: flex;
  align-items: center;
  color: #e6e8eb;
}
.combo span {
  margin-bottom: 2px;
}
.layer-combo {
  width: 260px;
  padding-left: 3px;
  gap: 3px;
  margin-bottom: 3px;
}
.swatch {
  width: 17px;
  height: 17px;
  background: #fff;
  border: 1px solid #111;
  flex: none;
  margin-left: 3px;
}
.layer-combo span {
  margin-left: 7px;
}
.layer-row {
  height: 30px;
  display: flex;
  align-items: center;
  gap: 4px;
  white-space: nowrap;
  color: #eceef0;
}
.block-col {
  margin-left: 2px;
}
.block-col span {
  margin-left: 7px;
}
.block-col .dd {
  margin-left: 8px;
}
.prop-col {
  padding-top: 7px;
  display: flex;
  flex-direction: column;
  gap: 3px;
}
.prop-row {
  display: flex;
  align-items: center;
  gap: 4px;
}
.prop-row .combo {
  width: 224px;
  padding-left: 4px;
  font-size: 15px;
}
.swatch-b {
  width: 20px;
  height: 20px;
  margin-left: 10px;
  border-color: #999;
}
.by1 {
  margin-left: 10px;
}
.ln {
  width: 80px;
  height: 1px;
  background: #eee;
  flex: none;
  margin-right: 2px;
}
.group-col {
  gap: 1px;
  padding-top: 4px;
}
.gb {
  width: 29px;
  height: 27px;
  display: flex;
  align-items: center;
  justify-content: center;
  box-sizing: border-box;
  margin-bottom: 2px;
}
.gb-on {
  border: 1px solid #6cb4ee;
  background: #44566c;
}
.util-col {
  margin-left: 1px;
}

.doctabs {
  margin-top: 5px;
  height: 28px;
  display: flex;
  align-items: flex-end;
  padding-left: 25px;
  flex: none;
}
.dtab {
  width: 155px;
  height: 28px;
  background: #2d3542;
  border-radius: 14px 14px 0 0;
  display: flex;
  align-items: center;
  padding-left: 14px;
  box-sizing: border-box;
  color: #a9aeb6;
  flex: none;
}
.dtab.on {
  background: #3b4453;
  color: #e6e8eb;
  padding-left: 14px;
  justify-content: space-between;
  padding-right: 17px;
}
.dtab-add {
  margin-left: 9px;
  width: 24px;
  height: 24px;
  background: #2d3542;
  border-radius: 8px 8px 0 0;
  text-align: center;
  font: 700 20px/24px "Liberation Sans", sans-serif;
  color: #aeb3bb;
}
.docbar {
  height: 5px;
  background: #3b4453;
  flex: none;
}

.viewport {
  position: relative;
  flex: 1;
  min-height: 0;
  background: #212830;
}
.vp-label {
  position: absolute;
  left: 2px;
  top: 4px;
  font-size: 16px;
  color: #e0e2e5;
}
.vp-btns {
  position: absolute;
  left: 1831px;
  top: 10px;
  display: flex;
  gap: 11px;
}
.viewcube {
  position: absolute;
  left: 1730px;
  top: 50px;
  width: 180px;
  height: 200px;
  color: #8b8f94;
}
.ring {
  position: absolute;
  left: 22px;
  top: 3px;
  width: 130px;
  height: 130px;
  border: 15px solid #404952;
  border-radius: 50%;
  box-sizing: border-box;
}
.cube {
  position: absolute;
  left: 59px;
  top: 40px;
  width: 56px;
  height: 56px;
  background: #a9abad;
  display: flex;
  align-items: center;
  justify-content: center;
}
.cube-in {
  width: 34px;
  height: 34px;
  background: #8f979c;
  color: #4f555a;
  font-size: 32px;
  line-height: 33px;
  text-align: center;
}
.dir {
  position: absolute;
  font-size: 20px;
  line-height: 24px;
}
.d-n { left: 77px; top: -3px; }
.d-w { left: 16px; top: 57px; }
.d-e { left: 138px; top: 57px; }
.d-s { left: 77px; top: 121px; color: #9a9ea3; }
.wcs {
  position: absolute;
  left: 58px;
  top: 162px;
  width: 57px;
  height: 20px;
  background: #7f8590;
  border-radius: 5px;
  color: #4c5058;
  font: 13px/20px "Liberation Sans", sans-serif;
  padding-left: 5px;
  box-sizing: border-box;
}
.wcs-tri {
  position: absolute;
  right: 5px;
  top: 7px;
  border-left: 5px solid transparent;
  border-right: 5px solid transparent;
  border-top: 6px solid #a5aab2;
}
.sogou {
  position: absolute;
  left: 1674px;
  top: 149px;
  width: 239px;
  height: 37px;
  background: #fbfcfd;
  border-radius: 3px;
  box-shadow: -1px 2px 0 #000;
  display: flex;
  align-items: center;
  z-index: 2;
}
.sg-logo {
  width: 34px;
  height: 32px;
  margin-left: 11px;
  background: linear-gradient(135deg, #ff7a3c, #f04a0c);
  border-radius: 3px;
  transform: rotate(-12deg);
  text-align: center;
  flex: none;
}
.sg-logo span {
  font: italic 700 32px/32px "Liberation Sans", sans-serif;
  color: #fff;
}
.sg-sep {
  width: 3px;
  height: 35px;
  margin-left: 8px;
  border-left: 1px solid #f7b9a0;
  border-right: 1px solid #f7b9a0;
  box-sizing: border-box;
  flex: none;
}
.sg-zh {
  margin-left: 6px;
  width: 24px;
  font-size: 22px;
  font-weight: 700;
  color: #0c68c4;
  flex: none;
}
.sg-pu {
  margin-left: 8px;
  width: 18px;
  margin-right: 4px;
  font-size: 22px;
  font-weight: 700;
  color: #0c68c4;
  line-height: 20px;
  flex: none;
}
.sogou svg {
  margin-left: 6px;
}
.navbar {
  position: absolute;
  left: 1864px;
  top: 263px;
  width: 40px;
  height: 259px;
  background: #646c72;
  border-radius: 4px;
}
.nav-scroll {
  position: absolute;
  left: 1903px;
  top: 342px;
  width: 9px;
  height: 74px;
  border-radius: 4px;
  background: #2a323b;
}
.nav-scroll b {
  display: block;
  margin-top: 36px;
  height: 38px;
  border-radius: 4px;
  background: #3f7a5a;
}
.ucs {
  position: absolute;
  left: 932px;
  top: 375px;
}
.cmd {
  position: absolute;
  left: 380px;
  top: 736px;
  width: 1144px;
  height: 32px;
  display: flex;
}
.cmd-grip {
  width: 70px;
  background: #2a313d;
  border-radius: 3px 0 0 3px;
  display: flex;
  align-items: center;
  gap: 7px;
  padding-left: 4px;
  box-sizing: border-box;
  flex: none;
}
.cmd-input {
  position: relative;
  flex: 1;
  background: #b9bbbd;
  border-radius: 2px;
  display: flex;
  align-items: center;
  padding-left: 5px;
  color: #77797c;
  font-style: italic;
}
.dd-cmd {
  margin-left: 3px;
  border-top-color: #444;
}
.cmd-input span {
  margin-left: 10px;
  margin-bottom: 2px;
  letter-spacing: 1px;
}
.dd-up {
  position: absolute;
  right: 5px;
  top: 13px;
  border-left: 5px solid transparent;
  border-right: 5px solid transparent;
  border-bottom: 7px solid #555;
}

.statusrow {
  height: 38px;
  flex: none;
  position: relative;
  border-top: 1px solid #3b4453;
  box-sizing: border-box;
  background: #212830;
}
.ltabs {
  position: absolute;
  left: 12px;
  top: 0;
  display: flex;
  align-items: center;
  height: 23px;
}
.ltab {
  height: 23px;
  line-height: 21px;
  text-align: center;
  width: 60px;
  background: #2d3542;
  color: #aeb3bb;
  font-size: 14px;
  border-radius: 0 0 8px 8px;
  flex: none;
}
.ltab.on {
  background: #3b4453;
  color: #fff;
  font-weight: 700;
}
.ltab.l1 {
  width: 66px;
  margin-left: 2px;
}
.ltab.l2 {
  width: 66px;
  margin-left: 2px;
}
.ltab-add {
  margin-left: 10px;
  width: 22px;
  height: 23px;
  background: #2d3542;
  text-align: center;
  font: 700 18px/22px "Liberation Sans", sans-serif;
  color: #aeb3bb;
  border-radius: 0 0 6px 6px;
}
.status {
  position: absolute;
  right: 7px;
  top: 1px;
  display: flex;
  gap: 3px;
}
.g {
  height: 30px;
  background: #3b4453;
  display: flex;
  align-items: center;
  flex: none;
  box-sizing: border-box;
}
.g1 { width: 34px; justify-content: center; font-size: 15px; font-weight: 600; color: #f0f0f0; }
.g2 { width: 79px; padding-left: 4px; }
.g3 { width: 128px; padding-left: 1px; }
.g4 { width: 77px; }
.g5 { width: 131px; }
.g6 { width: 80px; padding-left: 4px; }
.g7 { width: 32px; justify-content: center; }
.g8s { width: 3px; }
.g8 { width: 56px; padding-left: 3px; }
.sb {
  width: 28px;
  height: 30px;
  display: flex;
  align-items: center;
  justify-content: center;
  flex: none;
}
.sb.on {
  background: #6190c0;
}
.g4 .sb + .sb {
  margin-left: 2px;
}
.dd-s {
  margin-left: 5px;
  border-left-width: 5px;
  border-right-width: 5px;
  border-top-width: 6px;
}
.dd-g2 {
  margin-left: 9px;
}
.dd-g3 {
  margin-left: 8px;
}
.s2 {
  margin-left: 3px;
}
.s3 {
  margin-left: 6px;
}
.s4 {
  margin-left: 3px;
}
.s5 {
  margin-left: 6px;
}
.g6-sep {
  width: 1px;
  height: 30px;
  background: #222933;
  margin: 0 3px 0 5px;
}
.scale {
  font-size: 14px;
  margin-left: 10px;
  color: #e6e8eb;
}
.dd-sc {
  margin-left: 2px;
}

.taskbar {
  position: relative;
  height: 50px;
  flex: none;
  display: flex;
  align-items: center;
  background: linear-gradient(90deg, #e3e5e9, #dbe0e8);
  color: #111;
}
.tb-slot {
  display: flex;
  align-items: center;
  justify-content: center;
  flex: none;
}
.tb-win { width: 60px; }
.tb-find { width: 62px; }
.tb-swirl { width: 51px; }
.tb-search {
  width: 198px;
  height: 32px;
  background: #3a3a3a;
  border: 1px solid #e4e4e4;
  box-sizing: border-box;
  display: flex;
  align-items: center;
  padding-left: 2px;
  color: #f2f2f2;
  font-size: 13px;
  flex: none;
}
.tb-search span {
  margin-left: 3px;
}
.tb-mag {
  margin-left: auto;
  margin-right: 6px;
}
.tb-bars {
  width: 2px;
  height: 22px;
  margin-left: 10px;
  border-left: 1px solid #111;
  border-right: 1px solid #111;
  flex: none;
}
.tb-app {
  height: 50px;
  display: flex;
  align-items: center;
  justify-content: center;
  border-bottom: 3px solid #0078d4;
  box-sizing: border-box;
  flex: none;
}
.chrome { width: 51px; margin-left: 18px; }
.wechat { width: 51px; margin-left: 11px; }
.acad { width: 61px; margin-left: 6px; background: #f1f3f6; }
.tb-a {
  width: 28px;
  height: 38px;
  background: #f7dcd6;
  text-align: center;
  font: 700 34px/38px "Liberation Sans", sans-serif;
  color: #b3222a;
}
.tray {
  margin-left: auto;
  display: flex;
  align-items: center;
  height: 50px;
  padding-right: 25px;
}
.tslot {
  width: 30px;
  display: flex;
  align-items: center;
  justify-content: center;
  flex: none;
}
.t-ying {
  font-size: 15px;
}
.t-sg {
  margin-left: 4px;
}
.clock {
  width: 86px;
  margin-left: 18px;
  font-size: 15px;
  line-height: 21px;
  color: #111;
  flex: none;
}
.t-note {
  margin-left: 7px;
}
.watermark {
  position: absolute;
  left: 1694px;
  top: 22px;
  font-size: 20px;
  line-height: 24px;
  color: rgba(115, 115, 115, 0.75);
  white-space: nowrap;
}

.menu {
  position: absolute;
  left: 1032px;
  top: 449px;
  width: 224px;
  height: 581px;
  padding-top: 1px;
  box-sizing: border-box;
  background: #f0f0f0;
  border: 1px solid #d4d4d4;
  border-bottom: 0;
  color: #111;
  font-size: 15px;
  z-index: 4;
}
.m-row {
  position: relative;
  display: flex;
  align-items: center;
  margin: 0 2px;
}
.m-row.hot {
  background: #91c9f7;
}
.m-ic {
  width: 32px;
  height: 100%;
  display: flex;
  align-items: center;
  padding-left: 3px;
  box-sizing: border-box;
  flex: none;
}
.m-t {
  margin-left: 4px;
  white-space: nowrap;
}
.m-sub {
  position: absolute;
  right: 11px;
  top: 50%;
  margin-top: -5px;
}
.m-sep {
  display: flex;
  align-items: center;
  margin-left: 34px;
  margin-right: 2px;
}
.m-sep b {
  display: block;
  width: 100%;
  height: 1px;
  background: #d6d6d6;
}
</style>
